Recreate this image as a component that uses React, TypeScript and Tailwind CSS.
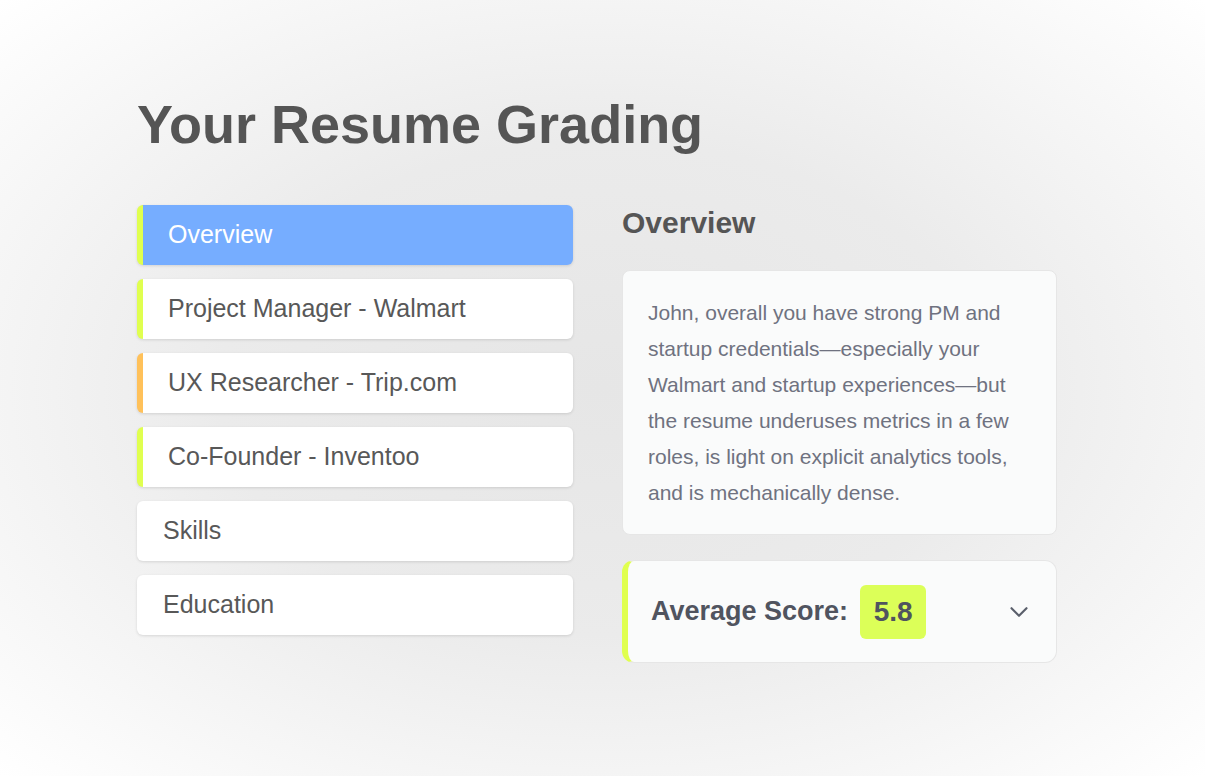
import React from "react";
import { ChevronDown } from "lucide-react";

const items = [
  { label: "Overview", accent: "border-l-[6px] border-l-[#e0ff4f]", active: true },
  { label: "Project Manager - Walmart", accent: "border-l-[6px] border-l-[#e0ff4f]" },
  { label: "UX Researcher - Trip.com", accent: "border-l-[6px] border-l-[#ffc15a]" },
  { label: "Co-Founder - Inventoo", accent: "border-l-[6px] border-l-[#e0ff4f]" },
  { label: "Skills", accent: "" },
  { label: "Education", accent: "" },
];

export default function App() {
  return (
    <div className="w-[1205px] h-[776px] overflow-hidden bg-[radial-gradient(ellipse_at_center,#e6e6e6_0%,#ebebeb_45%,#ffffff_100%)] font-['Liberation_Sans',Arial,sans-serif]">
      <div className="pl-[137px] pt-[98px]">
        <h1 className="font-bold text-[54px] leading-[53px] text-[#555555]">
          Your Resume Grading
        </h1>
        <div className="flex gap-[49px] mt-[54px]">
          <div className="w-[436px] flex flex-col gap-[14px]">
            {items.map((it) => (
              <div
                key={it.label}
                className={`h-[60px] rounded-md flex items-center shadow-[0_1px_3px_rgba(0,0,0,0.12)] ${it.accent} ${
                  it.accent ? "pl-[25px]" : "pl-[26px]"
                } ${it.active ? "bg-[#76adff] text-white" : "bg-white text-[#585858]"} text-[25px]`}
              >
                {it.label}
              </div>
            ))}
          </div>
          <div className="w-[435px] flex flex-col">
            <h2 className="text-[30px] leading-[36px] font-bold text-[#555555]">Overview</h2>
            <div className="mt-[29px] rounded-lg border border-[#e6e6e6] bg-[#fafbfb] pl-[25px] pr-[18px] pt-[24px] pb-[23px]">
              <p className="text-[21px] leading-[36px] text-[#6f7280]">
                John, overall you have strong PM and startup credentials—especially your Walmart and startup experiences—but the resume underuses metrics in a few roles, is light on explicit analytics tools, and is mechanically dense.
              </p>
            </div>
            <div className="mt-[25px] h-[103px] rounded-xl border border-[#e6e6e6] border-l-[6px] border-l-[#e0ff4f] bg-[#fafbfb] flex items-center pl-[23px] pr-[22px]">
              <span className="text-[27px] font-bold text-[#50545f]">Average Score:</span>
              <span className="ml-[12px] h-[54px] w-[66px] rounded-md bg-[#dcff58] flex items-center justify-center text-[28px] font-bold text-[#50545f]">
                5.8
              </span>
              <ChevronDown className="ml-auto text-[#5a5f6b]" size={30} strokeWidth={1.7} />
            </div>
          </div>
        </div>
      </div>
    </div>
  );
}
